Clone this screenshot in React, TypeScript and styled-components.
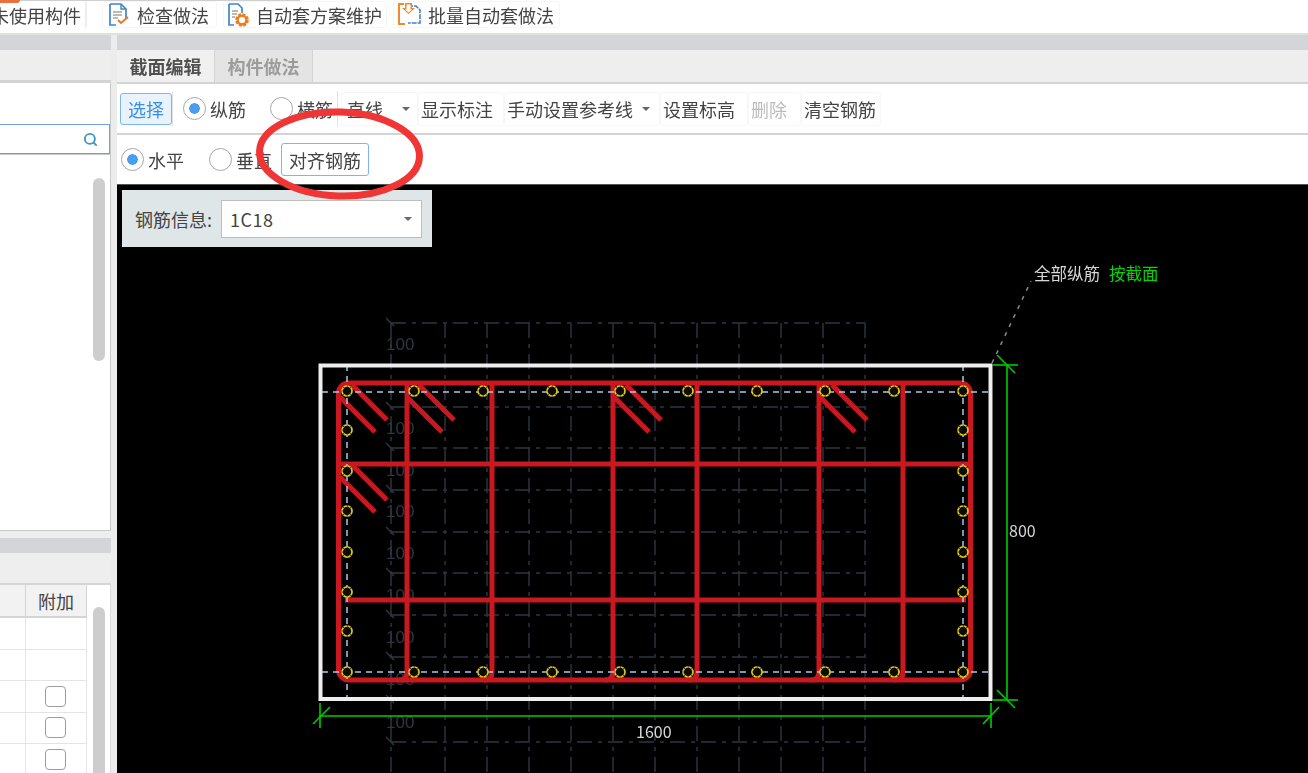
import React from 'react';
import styled, { createGlobalStyle } from 'styled-components';
import { Search } from 'lucide-react';

const Global = createGlobalStyle`
  * { box-sizing: border-box; }
  html, body { margin: 0; padding: 0; height: 100%; overflow: hidden; background: #fff; }
  body { font-family: "Noto Sans CJK SC", "Liberation Sans", sans-serif; color: #444; }
`;

const Page = styled.div`
  width: 1308px;
  height: 773px;
  display: flex;
  flex-direction: column;
  overflow: hidden;
  position: relative;
  filter: blur(0.3px);
`;

const TopBar = styled.div`
  height: 35px;
  flex: none;
  display: flex;
  align-items: flex-start;
  gap: 6px;
  padding-top: 1px;
  background: #fff;
  border-bottom: 2px solid #e0e0e0;
  overflow: hidden;
  position: relative;
  &::before {
    content: '';
    position: absolute;
    left: 20px;
    top: 0;
    width: 280px;
    height: 1px;
    background: #cfcfcf;
  }
  &::after {
    content: '';
    position: absolute;
    left: 0;
    top: 0;
    width: 20px;
    height: 3px;
    border-radius: 0 0 10px 0;
    background: #e8703a;
  }
`;

const TopItem = styled.div<{ $width: number; $pad: number }>`
  width: ${p => p.$width}px;
  height: 27px;
  flex: none;
  display: flex;
  align-items: center;
  gap: 7px;
  padding-left: ${p => p.$pad}px;
  font-size: 18px;
  line-height: 1;
  white-space: nowrap;
  border: 1px solid #f6f6f6;
  border-radius: 3px;
`;

const Clipped = styled(TopItem)`
  margin-left: -9px;
  margin-right: 9px;
  border: 0;
  border-right: 2px solid #eee;
`;

const Body = styled.div`
  flex: 1;
  display: flex;
  min-height: 0;
`;

const Left = styled.div`
  width: 111px;
  flex: none;
  display: flex;
  flex-direction: column;
  background: #eee;
`;

const GrayStrip = styled.div`
  height: 15px;
  flex: none;
  background: #d3d5d9;
`;

const LeftTabs = styled.div`
  height: 33px;
  flex: none;
  background: #eee;
  border-bottom: 3px solid #d4d4d4;
`;

const TreePane = styled.div`
  height: 448px;
  flex: none;
  background: #fff;
  border-right: 1px solid #c8c8c8;
  border-bottom: 1px solid #c8c8c8;
  position: relative;
  padding-top: 41px;
`;

const SearchBox = styled.div`
  height: 30px;
  border: 1px solid #6f9fe0;
  border-left: 0;
  display: flex;
  align-items: center;
  justify-content: flex-end;
  padding-right: 11px;
  color: #3f97c4;
  box-shadow: 0 1px 0 #c8c8c8;
`;

const ScrollThumb = styled.div<{ $top: number; $height: number }>`
  position: absolute;
  left: 93px;
  top: ${p => p.$top}px;
  width: 12px;
  height: ${p => p.$height}px;
  background: #cdcdcd;
  border-radius: 6px;
`;

const LowerStrip = styled.div`
  margin-top: 7px;
  height: 15px;
  flex: none;
  background: #d3d5d9;
`;

const LowerTabs = styled.div`
  height: 32px;
  flex: none;
  background: #eee;
  border-bottom: 2px solid #d5d5d5;
`;

const Table = styled.div`
  flex: 1;
  background: #fff;
  position: relative;
  display: grid;
  grid-template-columns: 26px 61px;
  grid-template-rows: 33px;
  grid-auto-rows: 31.5px;
  align-content: start;
  border-right: 1px solid #dcdcdc;
  overflow: hidden;
`;

const HeadCell = styled.div`
  background: #f2f2f2;
  border-bottom: 2px solid #d4d4d4;
  border-right: 1px solid #d4d4d4;
  font-size: 18px;
  line-height: 1;
  display: flex;
  align-items: center;
  justify-content: center;
`;

const Cell = styled.div`
  border-bottom: 1px solid #e4e4e4;
  border-right: 1px solid #e4e4e4;
  display: flex;
  align-items: center;
  justify-content: center;
`;

const Check = styled.span`
  width: 21px;
  height: 21px;
  margin-right: 2px;
  background: #fff;
  border: 1.5px solid #9d9d9d;
  border-radius: 4px;
`;

const Splitter = styled.div`
  width: 6px;
  flex: none;
  background: #ececec;
`;

const Right = styled.div`
  flex: 1;
  min-width: 0;
  display: flex;
  flex-direction: column;
`;

const TabRow = styled.div`
  height: 34px;
  flex: none;
  display: flex;
  background: #eee;
  border-bottom: 2px solid #d4d4d4;
`;

const Tab = styled.div<{ $active?: boolean }>`
  width: 98px;
  height: 32px;
  display: flex;
  align-items: center;
  justify-content: center;
  font-size: 18px;
  line-height: 1;
  font-weight: 700;
  color: ${p => (p.$active ? '#505050' : '#9c9c9c')};
  background: ${p => (p.$active ? '#f0f0f0' : '#e4e4e4')};
  border-right: 1px solid #d4d4d4;
`;

const ToolRow = styled.div`
  height: 51px;
  flex: none;
  display: flex;
  align-items: center;
  padding-left: 3px;
  background: #fff;
  border-bottom: 2px solid #d4d4d4;
`;

const SelectBtn = styled.div`
  width: 52px;
  height: 32px;
  flex: none;
  display: flex;
  align-items: center;
  justify-content: center;
  color: #3c8fe0;
  background: #e8f3fd;
  border: 1px solid #7db6ee;
  border-radius: 3px;
  font-size: 18px;
  line-height: 1;
`;

const VSep = styled.div<{ $after: number }>`
  width: 1px;
  height: 36px;
  margin-right: ${p => p.$after}px;
  background: #e2e2e2;
  flex: none;
`;

const Radio = styled.span<{ $on?: boolean; $width: number }>`
  display: inline-flex;
  align-items: center;
  gap: 4px;
  width: ${p => p.$width}px;
  flex: none;
  white-space: nowrap;
  font-size: 18px;
  line-height: 1;
  &::before {
    content: '';
    width: 21px;
    height: 21px;
    flex: none;
    border-radius: 50%;
    border: 1.5px solid #a6a6a6;
    background: ${p =>
      p.$on ? 'radial-gradient(circle, #4c9df0 0 5px, #fff 5.6px)' : '#fff'};
  }
`;

const LineSelect = styled.div`
  width: 77px;
  height: 34px;
  flex: none;
  display: flex;
  align-items: center;
  justify-content: space-between;
  padding: 0 7px 0 5px;
  font-size: 18px;
  line-height: 1;
  border: 1px solid #f6f6f6;
  border-radius: 3px;
`;

const Arrow = styled.span`
  width: 0;
  height: 0;
  flex: none;
  border-left: 4px solid transparent;
  border-right: 4px solid transparent;
  border-top: 4px solid #666;
`;

const ToolBtn = styled.div<{ $width: number; $muted?: boolean }>`
  width: ${p => p.$width}px;
  height: 34px;
  flex: none;
  display: flex;
  align-items: center;
  gap: 9px;
  padding-left: 2px;
  white-space: nowrap;
  font-size: 18px;
  line-height: 1;
  color: ${p => (p.$muted ? '#bcbcbc' : '#444')};
  border: 1px solid #f7f7f7;
  border-radius: 3px;
`;

const AlignRow = styled.div`
  height: 50px;
  flex: none;
  display: flex;
  align-items: center;
  padding-left: 4px;
  background: #fff;
  border-bottom: 1px solid #555;
`;

const AlignBtn = styled.div`
  width: 88px;
  height: 33px;
  flex: none;
  display: flex;
  align-items: center;
  justify-content: center;
  background: #fff;
  border: 1px solid #7db6ee;
  border-radius: 3px;
  font-size: 18px;
  line-height: 1;
`;

const Canvas = styled.div`
  flex: 1;
  background: #000;
  position: relative;
  overflow: hidden;
`;

const InfoPanel = styled.div`
  position: absolute;
  left: 5px;
  top: 5px;
  width: 310px;
  height: 57px;
  background: #dfe6e8;
  display: flex;
  align-items: center;
  padding-left: 13px;
`;

const InfoLabel = styled.span`
  width: 86px;
  flex: none;
  font-size: 18px;
  line-height: 1;
  white-space: nowrap;
`;

const InfoSelect = styled.div`
  width: 201px;
  height: 38px;
  background: #fff;
  border: 1px solid #bdbdbd;
  display: flex;
  align-items: center;
  justify-content: space-between;
  padding: 0 9px 0 8px;
  font-size: 18px;
  line-height: 1;
  letter-spacing: 0.5px;
`;

const Drawing = styled.svg`
  position: absolute;
  left: -117px;
  top: -185px;
`;

const Annotation = styled.svg`
  position: absolute;
  left: 0;
  top: 0;
  pointer-events: none;
`;

const cadFont = '"Noto Sans CJK SC", "Liberation Sans", sans-serif';

const gridXs = [391, 445, 487, 529, 571, 613, 655, 697, 739, 781, 823, 865];
const gridYs = [323, 407, 448, 490, 532, 573, 615, 657, 700, 742];

const GhostGrid = () => (
  <g stroke="#2f3642" strokeWidth={1.4} strokeDasharray="15 6 4 6" fill="none">
    {gridYs.map(y => (
      <line key={y} x1={391} y1={y} x2={865} y2={y} />
    ))}
    {gridXs.map(x => (
      <line key={x} x1={x} y1={323} x2={x} y2={773} />
    ))}
    {gridYs.map(y => (
      <line key={`t${y}`} x1={386} y1={y - 5} x2={394} y2={y + 3} strokeDasharray="none" />
    ))}
    {[344, 428, 470, 511, 553, 595, 637, 679, 722].map(y => (
      <text
        key={`l${y}`}
        x={386}
        y={y + 6}
        fill="#2f3642"
        stroke="none"
        fontSize={17}
        fontFamily="'Liberation Sans', sans-serif"
      >
        100
      </text>
    ))}
  </g>
);

const Bars = () => {
  const verticals = [407, 492, 613, 697, 819, 903];
  const hooks: [number, number][] = [
    [338, 0],
    [405, 0],
    [612, 0],
    [818, 0],
    [338, 80],
  ];
  return (
    <g stroke="#c9181f" strokeWidth={5} fill="none">
      <rect x={338.5} y={383} width={632} height={297} rx={10} />
      {verticals.map(x => (
        <path key={x} d={`M${x} 383V672Q${x} 680 ${x - 8} 680`} />
      ))}
      <line x1={339} y1={464} x2={970} y2={464} />
      <line x1={345} y1={600} x2={966} y2={600} />
      {hooks.map(([x, dy]) => (
        <g key={`${x}-${dy}`}>
          <line x1={x + 2} y1={397 + dy} x2={x + 37} y2={432 + dy} />
          <line x1={x + 14} y1={385 + dy} x2={x + 49} y2={420 + dy} />
        </g>
      ))}
    </g>
  );
};

const Rebar = ({ x, y }: { x: number; y: number }) => (
  <circle cx={x} cy={y} r={5} fill="#0b0b00" stroke="#e0c81c" strokeWidth={1.7} strokeDasharray="3.4 0.5" />
);

const topDots = [347, 414, 483, 552, 620, 688, 757, 825, 894, 963];
const sideDots = [430, 471, 511, 552, 592, 631];

const Section = () => (
  <Drawing width={1308} height={773} viewBox="0 0 1308 773">
    <GhostGrid />

    <Bars />

    <g stroke="#a8c8e8" strokeWidth={1.5} strokeDasharray="6 5" fill="none">
      <line x1={322} y1={392} x2={990} y2={392} />
      <line x1={322} y1={672} x2={990} y2={672} />
      <line x1={347} y1={365} x2={347} y2={698} />
      <line x1={963} y1={365} x2={963} y2={698} />
    </g>

    <rect x={320.5} y={365.5} width={670} height={333.5} fill="none" stroke="#eeeeee" strokeWidth={4} />

    {topDots.map(x => (
      <React.Fragment key={x}>
        <Rebar x={x} y={391} />
        <Rebar x={x} y={672} />
      </React.Fragment>
    ))}
    {sideDots.map(y => (
      <React.Fragment key={y}>
        <Rebar x={347} y={y} />
        <Rebar x={963} y={y} />
      </React.Fragment>
    ))}

    <g stroke="#00cc00" strokeWidth={1.6} fill="none">
      <line x1={993} y1={365} x2={1018} y2={365} />
      <line x1={1007} y1={365} x2={1007} y2={700} />
      <line x1={993} y1={700} x2={1018} y2={700} />
      <line x1={997} y1={355} x2={1015} y2={373} />
      <line x1={997} y1={690} x2={1015} y2={708} />
      <line x1={320} y1={716} x2={991} y2={716} />
      <line x1={320} y1={703} x2={320} y2={728} />
      <line x1={991} y1={703} x2={991} y2={728} />
      <line x1={313} y1={724} x2={330} y2={707} />
      <line x1={983} y1={724} x2={999} y2={707} />
    </g>

    <line x1={992} y1={363} x2={1031} y2={281} stroke="#8a8a8a" strokeWidth={1.5} strokeDasharray="4 6" />

    <g fontFamily={cadFont}>
      <text x={1034} y={280} fontSize={16.5} fill="#d8d8d8">全部纵筋</text>
      <text x={1109} y={280} fontSize={16.5} fill="#00d800">按截面</text>
      <text x={1009} y={537} fontSize={16} fill="#d8d8d8">800</text>
      <text x={636} y={738} fontSize={16} fill="#d8d8d8">1600</text>
    </g>
  </Drawing>
);

const RedEllipse = () => (
  <Annotation width={1308} height={773} viewBox="0 0 1308 773">
    <ellipse
      cx={339.5}
      cy={154}
      rx={80}
      ry={42}
      transform="rotate(2 339.5 154)"
      fill="none"
      stroke="#f03535"
      strokeWidth={7}
    />
  </Annotation>
);

const DocCheck = () => (
  <svg width={22} height={25} viewBox="0 0 22 25" fill="none" style={{ flex: 'none' }}>
    <path d="M2 2h11l5 5v9M8 23H2V2" stroke="#3f86c8" strokeWidth={1.7} />
    <path d="M13 2v5h5" stroke="#3f86c8" strokeWidth={1.4} />
    <path d="M5 10h9M5 13h9M5 16h5" stroke="#777" strokeWidth={1.2} />
    <path d="M10 18l3 3 7-6" stroke="#e8782a" strokeWidth={2} />
  </svg>
);

const DocGear = () => (
  <svg width={22} height={25} viewBox="0 0 22 25" fill="none" style={{ flex: 'none' }}>
    <path d="M2 2h9l4 4v5M7 23H2V2" stroke="#3f86c8" strokeWidth={1.7} />
    <path d="M5 9h6M5 12h5M5 15h3" stroke="#777" strokeWidth={1.2} />
    <circle cx={15} cy={18} r={5} stroke="#ee7b1c" strokeWidth={3.6} strokeDasharray="2.6 1.3" />
    <circle cx={15} cy={18} r={4.4} stroke="#ee7b1c" strokeWidth={2.2} />
  </svg>
);

const DocBatch = () => (
  <svg width={24} height={25} viewBox="0 0 24 25" fill="none" style={{ flex: 'none' }}>
    <path d="M7 2H2v20h6" stroke="#ee8a2c" strokeWidth={2} />
    <path d="M11 4h8l4 4v13H11" stroke="#3f86c8" strokeWidth={1.6} strokeDasharray="5 1" />
    <path d="M8 1h7v5h3l-6.500 6L5 6h3z" fill="#ee8a2c" />
    <path d="M9.500 2.500h4v5h1.500l-3.500 3-3.500-3h1.500z" fill="#fff" />
  </svg>
);

const App: React.FC = () => (
  <Page>
    <Global />
    <TopBar>
      <Clipped $width={96} $pad={0}>未使用构件</Clipped>
      <TopItem $width={115} $pad={5}><DocCheck />检查做法</TopItem>
      <TopItem $width={164} $pad={3}><DocGear />自动套方案维护</TopItem>
      <TopItem $width={167} $pad={3}><DocBatch />批量自动套做法</TopItem>
    </TopBar>
    <Body>
      <Left>
        <GrayStrip />
        <LeftTabs />
        <TreePane>
          <SearchBox><Search size={15} strokeWidth={3} /></SearchBox>
          <ScrollThumb $top={95} $height={183} />
        </TreePane>
        <LowerStrip />
        <LowerTabs />
        <Table>
          <HeadCell />
          <HeadCell>附加</HeadCell>
          <Cell /><Cell />
          <Cell /><Cell />
          <Cell /><Cell><Check /></Cell>
          <Cell /><Cell><Check /></Cell>
          <Cell /><Cell><Check /></Cell>
          <ScrollThumb $top={22} $height={190} />
        </Table>
      </Left>
      <Splitter />
      <Right>
        <GrayStrip />
        <TabRow>
          <Tab $active>截面编辑</Tab>
          <Tab>构件做法</Tab>
        </TabRow>
        <ToolRow>
          <SelectBtn>选择</SelectBtn>
          <VSep $after={10} />
          <Radio $on $width={87}>纵筋</Radio>
          <Radio $width={67}>横筋</Radio>
          <VSep $after={3} />
          <LineSelect>直线<Arrow /></LineSelect>
          <ToolBtn $width={86}>显示标注</ToolBtn>
          <ToolBtn $width={156}>手动设置参考线<Arrow /></ToolBtn>
          <ToolBtn $width={88}>设置标高</ToolBtn>
          <ToolBtn $width={53} $muted>删除</ToolBtn>
          <ToolBtn $width={80}>清空钢筋</ToolBtn>
        </ToolRow>
        <AlignRow>
          <Radio $on $width={88}>水平</Radio>
          <Radio $width={72}>垂直</Radio>
          <AlignBtn>对齐钢筋</AlignBtn>
        </AlignRow>
        <Canvas>
          <Section />
          <InfoPanel>
            <InfoLabel>钢筋信息:</InfoLabel>
            <InfoSelect>1C18<Arrow /></InfoSelect>
          </InfoPanel>
        </Canvas>
      </Right>
    </Body>
    <RedEllipse />
  </Page>
);

export default App;
